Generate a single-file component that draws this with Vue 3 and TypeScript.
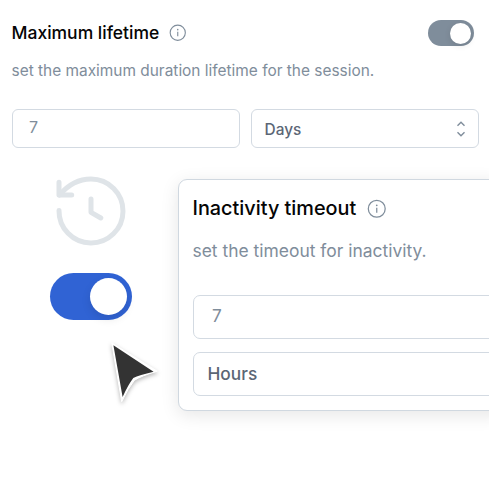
<script setup lang="ts">
import { ref } from 'vue'

const lifetime = ref('7')
const timeout = ref('7')
const lifetimeOn = ref(true)
const sessionOn = ref(true)
</script>

<template>
  <main class="page">
    <section class="lifetime">
      <header class="heading">
        <h2 class="title">Maximum lifetime</h2>
        <svg class="info" viewBox="0 0 18 18" fill="none" stroke="currentColor">
          <circle cx="9" cy="9" r="7.8" />
          <path d="M9 8v4.6" />
          <circle class="dot" cx="9" cy="5.8" r=".8" />
        </svg>
        <button class="toggle" :class="{ on: lifetimeOn }" @click="lifetimeOn = !lifetimeOn"><span class="knob" /></button>
      </header>
      <p class="note">set the maximum duration lifetime for the session.</p>
      <div class="fields">
        <div class="field number">{{ lifetime }}</div>
        <div class="field select">
          <span>Days</span>
          <svg class="chevrons" viewBox="0 0 10 16" fill="none" stroke="currentColor">
            <path d="M1.5 4.8 5 1.3l3.5 3.5M1.5 11.2 5 14.7l3.5-3.5" />
          </svg>
        </div>
      </div>
    </section>

    <div class="lower">
      <aside class="art">
        <svg class="history" viewBox="0 0 72 72" fill="none" stroke="currentColor">
          <path d="M5 35.5a32 32 0 1 0 32-31.5C24 4 14 10 5.5 20" />
          <path d="M5 7.2V20h12.7M37 24v13.3l9.8 5.7" />
        </svg>
        <button class="toggle large" :class="{ on: sessionOn }" @click="sessionOn = !sessionOn"><span class="knob" /></button>
        <svg class="cursor" viewBox="0 0 60 70">
          <path class="edge" d="M6.8 2.9 52.3 31.2Q36 36 29.5 40.2Q23 48 16.7 61.7Z" />
          <path class="fill" d="M8.4 5.3 48.6 31.7Q34 35 28.3 38Q23 45 17.6 57Z" />
        </svg>
      </aside>

      <section class="card">
        <header class="heading">
          <h2 class="title">Inactivity timeout</h2>
          <svg class="info" viewBox="0 0 18 18" fill="none" stroke="currentColor">
            <circle cx="9" cy="9" r="7.8" />
            <path d="M9 8v4.6" />
            <circle class="dot" cx="9" cy="5.8" r=".8" />
          </svg>
        </header>
        <p class="note">set the timeout for inactivity.</p>
        <div class="field number">{{ timeout }}</div>
        <div class="field select"><span>Hours</span></div>
      </section>
    </div>
  </main>
</template>

<style>
body {
  margin: 0;
  background: #fff;
}
</style>

<style scoped>
* {
  box-sizing: border-box;
}
.page {
  width: 489px;
  height: 477px;
  overflow: hidden;
  background: #fff;
  font-family: Inter, "Liberation Sans", sans-serif;
  color: #7f8d9b;
}
.lifetime {
  height: 179.3px;
  padding: 20px 10px 0 11.5px;
}
.heading {
  display: flex;
  align-items: center;
}
.lifetime .heading {
  height: 26px;
  padding-right: 5.4px;
}
.title {
  margin: 0;
  color: #050505;
  font-size: 17.5px;
  font-weight: 500;
  line-height: 22px;
  white-space: nowrap;
}
.lifetime .title {
  padding-bottom: 1px;
}
.info {
  width: 17.5px;
  height: 17.5px;
  margin-left: 9.5px;
  flex: none;
  stroke-width: 1.15;
}
.dot {
  fill: currentColor;
  stroke: none;
}
.toggle {
  display: flex;
  align-items: center;
  width: 46px;
  height: 26px;
  margin-left: auto;
  padding: 0 3px;
  border: 0;
  border-radius: 30px;
  background: #7f8d9b;
}
.toggle.on {
  justify-content: flex-end;
}
.knob {
  width: 21px;
  height: 21px;
  border-radius: 50%;
  background: #fff;
  box-shadow: 0 2px 6px rgba(0, 0, 0, 0.1);
}
.note {
  margin: 0;
  font-size: 15.43px;
  white-space: nowrap;
}
.lifetime .note {
  margin-top: 15px;
  line-height: 20px;
}
.fields {
  display: grid;
  grid-template-columns: 1fr 1fr;
  gap: 11px;
  margin-top: 28px;
}
.field {
  display: flex;
  align-items: center;
  height: 39px;
  border: 1.5px solid #d3dae2;
  border-radius: 6px;
  font-size: 16px;
}
.number {
  padding: 0 16.5px 3px;
}
.select {
  justify-content: space-between;
  padding: 1px 12px 0 12.8px;
  color: #5b6675;
  font-weight: 500;
  font-size: 15.4px;
}
.chevrons {
  width: 10px;
  height: 16px;
  color: #7f8d9b;
  stroke-width: 1.4;
}
.lower {
  display: flex;
}
.art {
  width: 178px;
  height: 297.7px;
  flex: none;
}
.history {
  display: block;
  width: 72px;
  height: 72px;
  margin: -4.3px 0 0 54px;
  color: #dfe4e8;
  stroke-width: 5;
  stroke-linecap: round;
  stroke-linejoin: round;
}
.large {
  width: 81.2px;
  height: 47px;
  margin: 26px 0 0 50.4px;
  padding: 0 5px;
  background: #3063d4;
}
.large .knob {
  width: 37px;
  height: 37px;
  box-shadow: 0 4px 10px rgba(0, 0, 0, 0.1);
}
.cursor {
  display: block;
  width: 60px;
  height: 70px;
  margin: 20px 0 0 104.5px;
  overflow: visible;
}
.edge {
  fill: #fff;
  stroke: #fff;
  filter: drop-shadow(0 2px 2px rgba(0, 0, 0, 0.28));
}
.fill {
  fill: #333;
}
.card {
  width: 330px;
  height: 232px;
  flex: none;
  padding: 13.5px 0 0 13.5px;
  border: 1.5px solid #d0d8e0;
  border-radius: 9px;
  background: #fff;
  box-shadow: 0 4px 18px rgba(0, 0, 0, 0.1);
}
.card .heading {
  height: 30px;
}
.card .title {
  font-size: 19.85px;
  padding-bottom: 1px;
}
.card .info {
  width: 19.5px;
  height: 19.5px;
  margin-left: 10.4px;
}
.card .note {
  margin-top: 15px;
  font-size: 17.45px;
  line-height: 24px;
}
.card .field {
  height: 44px;
  border-radius: 7px;
  font-size: 17.3px;
}
.card .number {
  margin-top: 32.3px;
  padding: 0 18.5px 2.5px;
}
.card .select {
  margin-top: 12.7px;
  padding: 0 14px 1px;
}
</style>
